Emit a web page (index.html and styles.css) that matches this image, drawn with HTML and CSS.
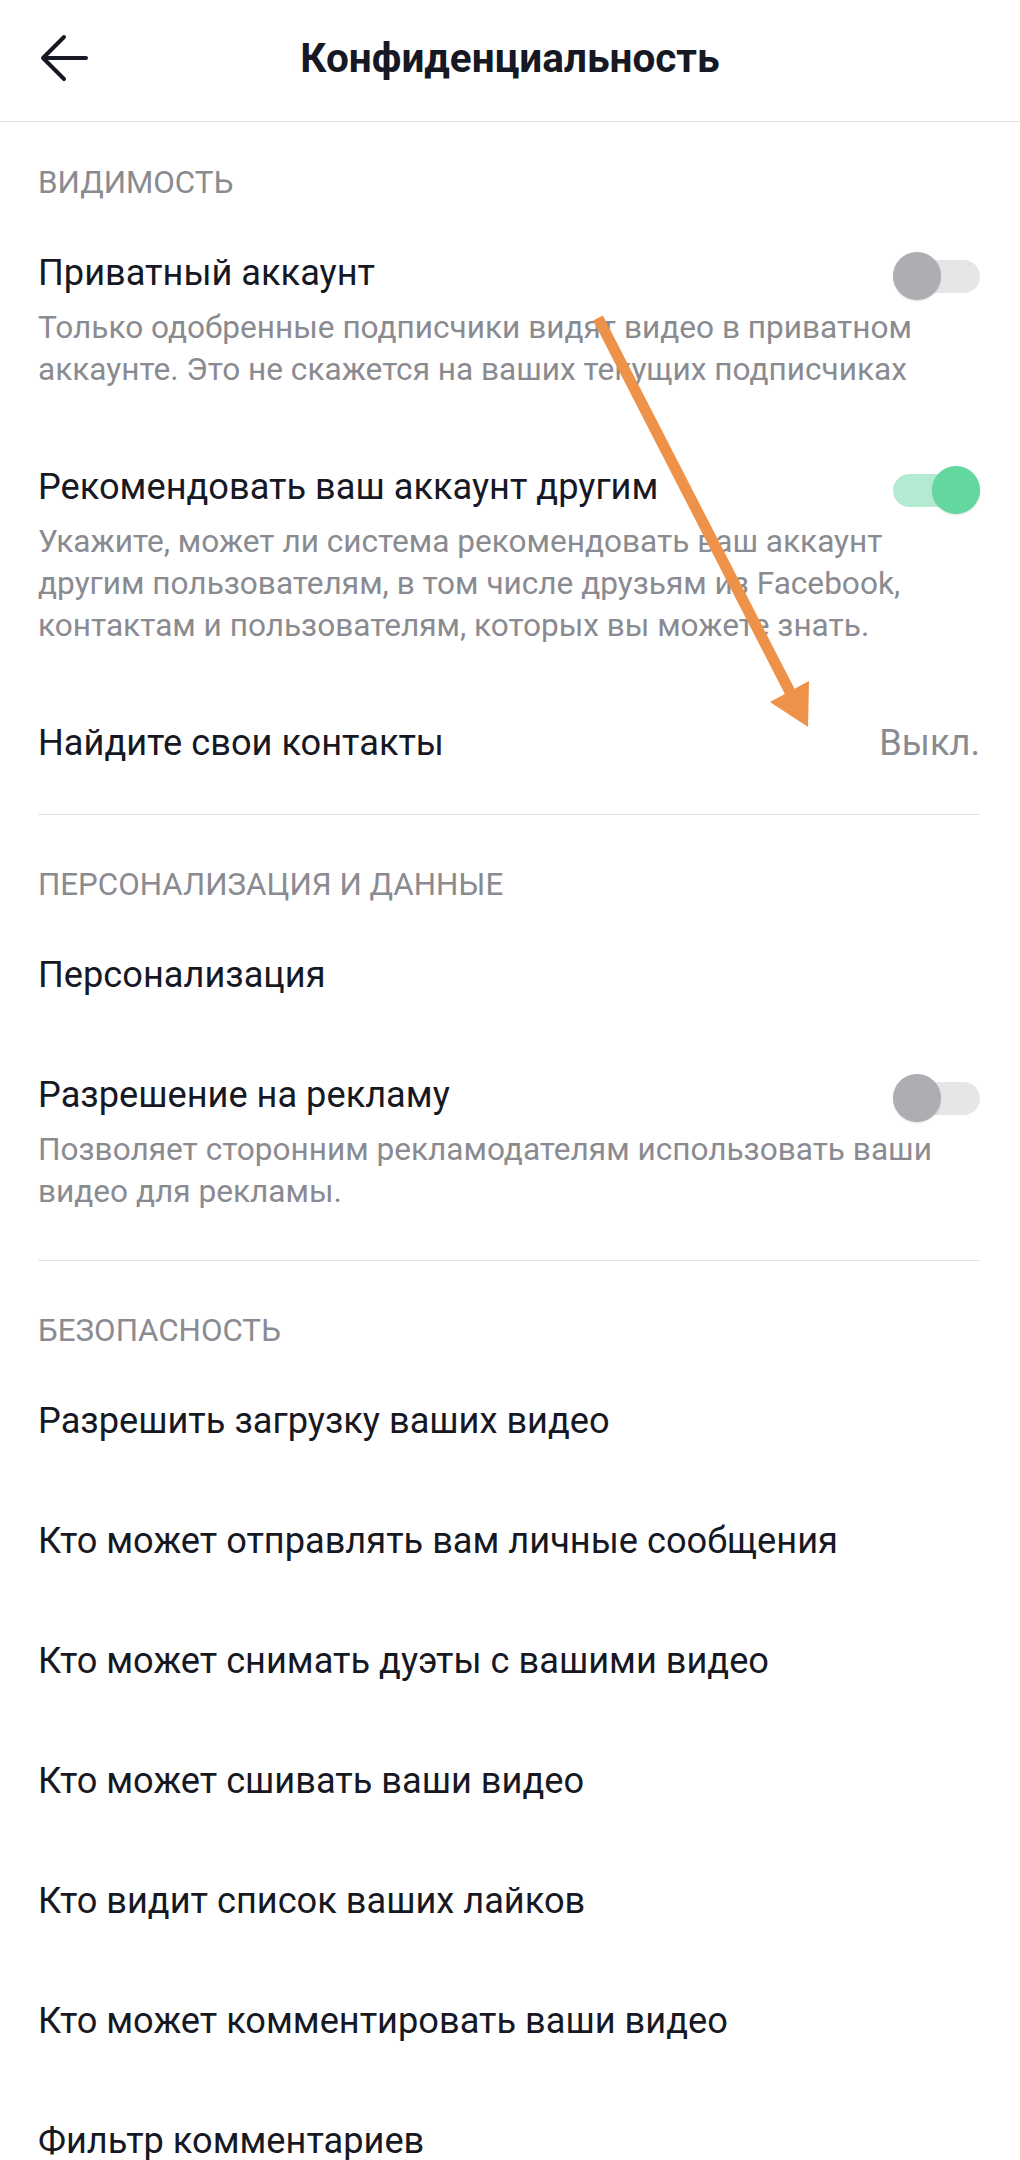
FILE: index.html
```html
<!DOCTYPE html>
<html lang="ru">
<head>
<meta charset="utf-8">
<title>Конфиденциальность</title>
<link rel="stylesheet" href="styles.css">
</head>
<body>
<div class="page">
  <header class="topbar">
    <div class="topbar-left">
      <svg class="back-icon" width="48" height="48" viewBox="0 0 48 48" aria-hidden="true">
        <path d="M3 24 H46 M24 3 L3 24 L24 45" fill="none" stroke="#161823" stroke-width="4" stroke-linecap="round" stroke-linejoin="round"/>
      </svg>
    </div>
    <h1 class="title">Конфиденциальность</h1>
    <div class="topbar-right"></div>
  </header>

  <section class="section section-first">
    <h2 class="section-title">ВИДИМОСТЬ</h2>
    <div class="row row-desc">
      <div class="row-head">
        <span class="row-label">Приватный аккаунт</span>
        <span class="toggle"><span class="track"></span><span class="knob"></span></span>
      </div>
      <p class="row-text">Только одобренные подписчики видят видео в приватном аккаунте. Это не скажется на ваших текущих подписчиках</p>
    </div>
    <div class="row row-desc">
      <div class="row-head">
        <span class="row-label">Рекомендовать ваш аккаунт другим</span>
        <span class="toggle toggle-on"><span class="track"></span><span class="knob"></span></span>
      </div>
      <p class="row-text">Укажите, может ли система рекомендовать ваш аккаунт другим пользователям, в том числе друзьям из Facebook, контактам и пользователям, которых вы можете знать.</p>
    </div>
    <div class="row row-plain">
      <span class="row-label">Найдите свои контакты</span>
      <span class="row-value">Выкл.</span>
    </div>
  </section>

  <section class="section">
    <h2 class="section-title">ПЕРСОНАЛИЗАЦИЯ И ДАННЫЕ</h2>
    <div class="row row-plain">
      <span class="row-label">Персонализация</span>
    </div>
    <div class="row row-desc">
      <div class="row-head">
        <span class="row-label">Разрешение на рекламу</span>
        <span class="toggle"><span class="track"></span><span class="knob"></span></span>
      </div>
      <p class="row-text">Позволяет сторонним рекламодателям использовать ваши видео для рекламы.</p>
    </div>
  </section>

  <section class="section section-last">
    <h2 class="section-title">БЕЗОПАСНОСТЬ</h2>
    <div class="row row-plain"><span class="row-label">Разрешить загрузку ваших видео</span></div>
    <div class="row row-plain"><span class="row-label">Кто может отправлять вам личные сообщения</span></div>
    <div class="row row-plain"><span class="row-label">Кто может снимать дуэты с вашими видео</span></div>
    <div class="row row-plain"><span class="row-label">Кто может сшивать ваши видео</span></div>
    <div class="row row-plain"><span class="row-label">Кто видит список ваших лайков</span></div>
    <div class="row row-plain"><span class="row-label">Кто может комментировать ваши видео</span></div>
    <div class="row row-plain"><span class="row-label">Фильтр комментариев</span></div>
  </section>

  <svg class="annotation" width="1020" height="2160" viewBox="0 0 1020 2160" aria-hidden="true">
    <line x1="598" y1="318" x2="790" y2="692" stroke="#ef9249" stroke-width="11" stroke-linecap="butt"/>
    <polygon points="808,727 770,702 809,681" fill="#ef9249"/>
  </svg>
</div>
</body>
</html>
```

FILE: styles.css
```css
* { box-sizing: border-box; }

html, body {
  margin: 0;
  padding: 0;
  background: #ffffff;
}

body {
  font-family: Roboto, "Noto Sans", "Liberation Sans", sans-serif;
  color: #161823;
}

.page {
  position: relative;
  width: 1020px;
  overflow: hidden;
}

.topbar {
  display: grid;
  grid-template-columns: 1fr auto 1fr;
  align-items: center;
  height: 122px;
  padding-bottom: 5px;
  border-bottom: 1px solid #e3e3e4;
}

.topbar-left {
  padding-left: 40px;
  display: flex;
  align-items: center;
}

.back-icon { display: block; }

.title {
  margin: 0;
  font-size: 40.5px;
  font-weight: 700;
  line-height: 50px;
  color: #161823;
}

.section {
  margin: 0 40px 0 38px;
  padding-bottom: 11px;
  border-bottom: 1px solid #e3e3e4;
}

.section-last { border-bottom: none; }

.section-title {
  margin: 0 0 10px;
  padding-top: 50px;
  font-size: 31.3px;
  font-weight: 400;
  line-height: 40px;
  color: #8a8b91;
}

.section-first .section-title { padding-top: 41px; }

.row-plain {
  height: 120px;
  display: flex;
  align-items: center;
  justify-content: space-between;
}

.row-desc {
  padding: 36px 0 36px;
}

.row-head {
  display: flex;
  align-items: center;
  justify-content: space-between;
  height: 48px;
}

.row-label {
  font-size: 36.2px;
  line-height: 44px;
  color: #161823;
}

.row-value {
  font-size: 36.2px;
  line-height: 44px;
  color: #8a8b91;
}

.row-text {
  margin: 10px 0 0;
  font-size: 31.6px;
  line-height: 42px;
  color: #8a8b91;
}

.toggle {
  position: relative;
  display: flex;
  align-items: center;
  width: 87px;
  height: 48px;
  margin-top: 6px;
  flex: none;
}

.track {
  width: 100%;
  height: 33px;
  border-radius: 17px;
  background: #e6e6e8;
}

.knob {
  position: absolute;
  top: 0;
  left: 0;
  width: 48px;
  height: 48px;
  border-radius: 50%;
  background: #adadb2;
  box-shadow: 0 1px 2px rgba(0, 0, 0, 0.12);
}

.toggle-on .track { background: #b3ebd2; }

.toggle-on .knob {
  left: auto;
  right: 0;
  background: #63d79d;
}

.annotation {
  position: absolute;
  top: 0;
  left: 0;
  pointer-events: none;
}
```
